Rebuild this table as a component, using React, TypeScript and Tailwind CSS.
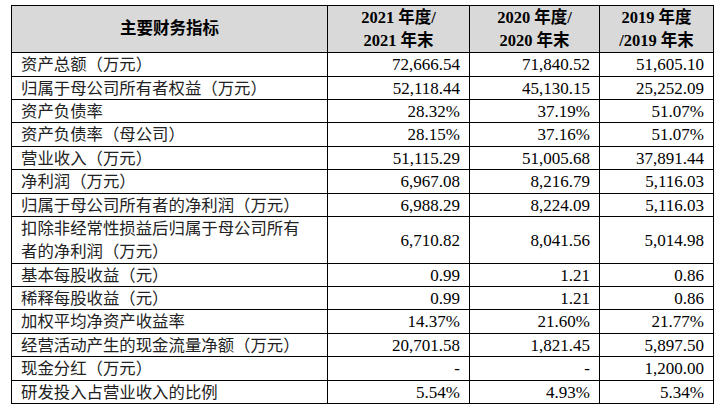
const rows: { label: string[]; v: [string, string, string]; h: string }[] = [
  { label: ['资产总额（万元）'], v: ['72,666.54', '71,840.52', '51,605.10'], h: 'h-[23px]' },
  { label: ['归属于母公司所有者权益（万元）'], v: ['52,118.44', '45,130.15', '25,252.09'], h: 'h-[22px]' },
  { label: ['资产负债率'], v: ['28.32%', '37.19%', '51.07%'], h: 'h-[22px]' },
  { label: ['资产负债率（母公司）'], v: ['28.15%', '37.16%', '51.07%'], h: 'h-[23px]' },
  { label: ['营业收入（万元）'], v: ['51,115.29', '51,005.68', '37,891.44'], h: 'h-[22px]' },
  { label: ['净利润（万元）'], v: ['6,967.08', '8,216.79', '5,116.03'], h: 'h-[23px]' },
  { label: ['归属于母公司所有者的净利润（万元）'], v: ['6,988.29', '8,224.09', '5,116.03'], h: 'h-[22px]' },
  {
    label: ['扣除非经常性损益后归属于母公司所有', '者的净利润（万元）'],
    v: ['6,710.82', '8,041.56', '5,014.98'],
    h: 'h-[46px]',
  },
  { label: ['基本每股收益（元）'], v: ['0.99', '1.21', '0.86'], h: 'h-[22px]' },
  { label: ['稀释每股收益（元）'], v: ['0.99', '1.21', '0.86'], h: 'h-[22px]' },
  { label: ['加权平均净资产收益率'], v: ['14.37%', '21.60%', '21.77%'], h: 'h-[23px]' },
  { label: ['经营活动产生的现金流量净额（万元）'], v: ['20,701.58', '1,821.45', '5,897.50'], h: 'h-[22px]' },
  { label: ['现金分红（万元）'], v: ['-', '-', '1,200.00'], h: 'h-[23px]' },
  { label: ['研发投入占营业收入的比例'], v: ['5.54%', '4.93%', '5.34%'], h: 'h-[22px]' },
];

const years: [string, string][] = [
  ['2021 年度/', '2021 年末'],
  ['2020 年度/', '2020 年末'],
  ['2019 年度', '/2019 年末'],
];

const serif = "font-['Liberation_Serif','Noto_Sans_CJK_SC',serif]";

export default function App() {
  return (
    <div className={`w-[724px] h-[410px] overflow-hidden bg-white pt-[5px] pl-[11px] text-black ${serif}`}>
      <table className={`table-fixed border-collapse w-[702px] ${serif}`}>
        <colgroup>
          <col className="w-[316px]" />
          <col className="w-[142px]" />
          <col className="w-[130px]" />
          <col className="w-[114px]" />
        </colgroup>
        <thead>
          <tr className="bg-[#d9d9d9]">
            <th className={`border border-black p-0 text-[16.5px] font-bold ${serif}`}>
              <div className="flex h-[46px] items-center justify-center">主要财务指标</div>
            </th>
            {years.map(([a, b]) => (
              <th key={a} className={`border border-black p-0 text-[16.5px] font-bold ${serif}`}>
                <div className="flex h-[46px] flex-col items-center justify-center leading-[23px]">
                  <span>{a}</span>
                  <span>{b}</span>
                </div>
              </th>
            ))}
          </tr>
        </thead>
        <tbody>
          {rows.map((r) => (
            <tr key={r.label[0]}>
              <td className={`border border-black p-0 text-[16.4px] text-[#222] ${serif}`}>
                <div className={`flex ${r.h} flex-col justify-center overflow-hidden pl-[9px] leading-[23px]`}>
                  {r.label.map((l, i) => (
                    <span key={i}>{l}</span>
                  ))}
                </div>
              </td>
              {r.v.map((x, i) => (
                <td key={i} className={`border border-black p-0 text-[17px] ${serif}`}>
                  <div className={`flex ${r.h} items-center justify-end overflow-hidden pr-[9px] leading-[23px]`}>
                    {x}
                  </div>
                </td>
              ))}
            </tr>
          ))}
        </tbody>
      </table>
    </div>
  );
}
